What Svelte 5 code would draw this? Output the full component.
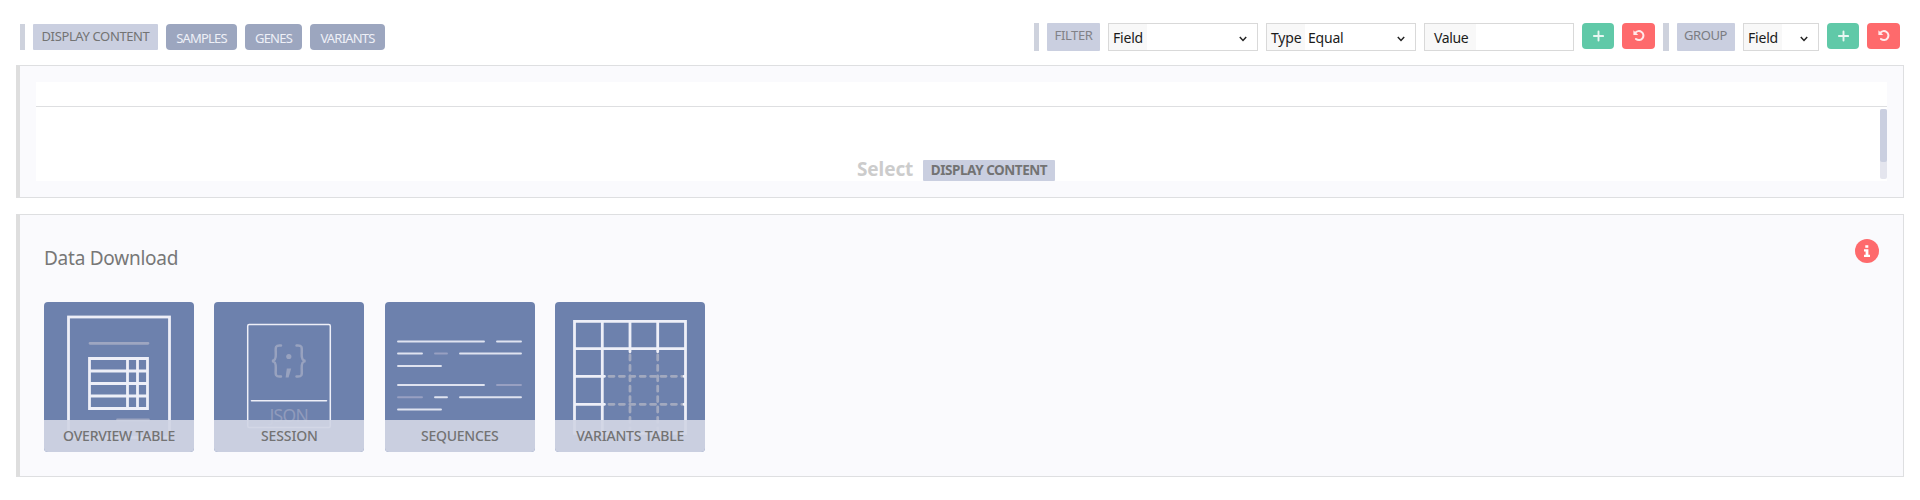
<script>
  const contents = [
    { name: 'SAMPLES', width: 71 },
    { name: 'GENES', width: 57 },
    { name: 'VARIANTS', width: 75 }
  ];
  const tiles = [
    { id: 'overview', name: 'OVERVIEW TABLE', spacing: -0.2 },
    { id: 'session', name: 'SESSION', spacing: -0.1 },
    { id: 'sequences', name: 'SEQUENCES', spacing: -0.25 },
    { id: 'variants', name: 'VARIANTS TABLE', spacing: -0.2 }
  ];
</script>

{#snippet chevron()}
  <svg class="chevron" width="8" height="6" viewBox="0 0 8 6"><path d="M.8 1 4 4.400 7.200 1" fill="none" stroke="#222" stroke-width="1.500" /></svg>
{/snippet}

{#snippet actions()}
  <button class="action add" aria-label="Add">
    <svg width="12" height="12" viewBox="0 0 12 12"><path d="M6.500 1.400v9.200M1.900 6h9.200" stroke="#e8f7f2" stroke-width="1.900" stroke-linecap="round" /></svg>
  </button>
  <button class="action reset" aria-label="Reset">
    <svg width="12" height="12" viewBox="0 0 12 12"><path d="M2.200 3A4.500 4.500 0 1 1 3 9" fill="none" stroke="#ffe9ea" stroke-width="2" stroke-linecap="round" /><path d="M.4.3v4.600h4.900z" fill="#ffe9ea" /></svg>
  </button>
{/snippet}

<div class="page">
  <header>
    <div class="left">
      <i class="bar"></i>
      <span class="tag display"><span>DISPLAY CONTENT</span></span>
      {#each contents as c}
        <button class="content" style:width="{c.width}px">{c.name}</button>
      {/each}
    </div>
    <div class="right">
      <i class="bar"></i>
      <span class="tag filter"><span>FILTER</span></span>
      <div class="box"><span class="prefix">Field</span>{@render chevron()}</div>
      <div class="box"><span class="prefix">Type</span><span class="val">Equal</span>{@render chevron()}</div>
      <div class="box"><span class="prefix value">Value</span></div>
      {@render actions()}
      <i class="bar wide"></i>
      <span class="tag group"><span>GROUP</span></span>
      <div class="box small"><span class="prefix">Field</span>{@render chevron()}</div>
      {@render actions()}
    </div>
  </header>

  <section class="panel view">
    <div class="canvas">
      <div class="head"></div>
      <div class="body">
        <div class="hint"><b class="select">Select</b><b class="hint-tag"><span>DISPLAY CONTENT</span></b></div>
        <div class="track"><div class="thumb"></div></div>
      </div>
    </div>
  </section>

  <section class="panel download">
    <div class="title">
      <h2>Data Download</h2>
      <svg class="info" width="24" height="24" viewBox="0 0 24 24">
        <circle cx="12" cy="12" r="12" fill="#fe6a6c" />
        <path d="M10.300 6.200h3v2.600h-3zM9 10.200h4.400v5.600H15V18H9v-2.200h1.600v-3.400H9z" fill="#fff" />
      </svg>
    </div>
    <div class="tiles">
      {#each tiles as t}
        <div class="tile">
          <svg width="150" height="150" viewBox="0 0 150 150" fill="none" stroke="#eeeff8" stroke-linecap="round">
            {#if t.id === 'overview'}
              <rect x="24.500" y="15" width="101" height="120.500" stroke-width="2.800" />
              <path d="M46 41.300h58M73.500 118h31" stroke="#9ea6c1" stroke-width="2.800" />
              <path d="M45.500 56.500h58v50h-58zM45.500 69h58M45.500 81.500h58M45.500 94h58M83.500 56.500v50M93.500 56.500v50" stroke-width="2.800" />
            {:else if t.id === 'session'}
              <rect x="33.700" y="22.500" width="82.600" height="103" rx="1.500" stroke-width="1.500" />
              <path d="M37.500 98.700h75" stroke-width="1.600" />
              <path d="M67 43.500c-6-.7-5.500 2-5.200 8 .2 4.500-.3 7-3.800 7.500 3.500.5 4 3 3.800 7.500-.3 6-.8 8.700 5.200 8M82.500 43.500c6-.7 5.500 2 5.200 8-.2 4.500.3 7 3.800 7.500-3.500.5-4 3-3.800 7.500.3 6 .8 8.700-5.200 8" stroke="#98a2bf" stroke-width="2.500" />
              <circle cx="74.800" cy="54.500" r="2.600" fill="#98a2bf" stroke="none" />
              <path d="M72.800 66.500h4.400l-2.600 9h-3z" fill="#98a2bf" stroke="none" />
              <text x="55.500" y="119.500" class="json">JSON</text>
            {:else if t.id === 'sequences'}
              <path d="M13 39.500h86M112 39.500h24M13 51.500h24M75 51.500h61M13 64h43M13 83h86M50 95.200h12M75 95.200h61M13 107.500h43" stroke="#dfe3f0" stroke-width="1.900" />
              <path d="M50 51.500h12M112 83h24M13 95.200h24" stroke="#98a0c2" stroke-width="1.900" />
            {:else}
              <path d="M75 53v78M102.700 53v78M54 74.300h74M54 102.300h74" stroke="#a2a9bf" stroke-width="2.800" stroke-dasharray="5 5.400" />
              <path d="M19.500 19.300h111v112h-111zM19.500 46.700h111M47.300 19.300v112M75 19.300v30.500M102.700 19.300v30.500M19.500 74.300h30M19.500 102.300h30M129 74.300h1M129 102.300h1" stroke-width="2.800" />
            {/if}
          </svg>
          <div class="caption" style:letter-spacing="{t.spacing}px">{t.name}</div>
        </div>
      {/each}
    </div>
  </section>
</div>

<style>
  :global(body) { background: #fff; overflow: hidden; }
  * { box-sizing: border-box; }
  .page { height: 500px; padding: 23px 16px 0; font-family: "Noto Sans", "Open Sans", sans-serif; color: #737373; }
  header { display: flex; justify-content: space-between; height: 42px; padding: 0 4px; }
  .left, .right { display: flex; align-items: flex-start; gap: 8px; }
  .left { padding-top: 1px; }
  button { border: 0; padding: 0; font: inherit; display: flex; justify-content: center; align-items: center; }
  .bar { width: 5px; height: 28px; background: #ced2dd; }
  .bar.wide { width: 6px; }
  .left .bar { height: 26px; }
  .tag { height: 28px; background: #cacfe0; border-radius: 1px; font-size: 13px; line-height: 24px; display: flex; justify-content: center; white-space: nowrap; }
  .display { width: 125px; height: 26px; letter-spacing: -.37px; }
  .filter { width: 53px; letter-spacing: -.4px; color: #818287; }
  .group { width: 58px; letter-spacing: -.45px; color: #7b7c82; padding-right: 1px; }
  .content { height: 26px; border-radius: 4px; background: #9ca6bf; color: #eef0f7; font-size: 13px; letter-spacing: -.8px; padding-top: 1px; }
  .box { width: 150px; height: 28px; border: 1px solid #d9d9d9; display: flex; align-items: center; color: #1b1b1b; font-size: 14px; line-height: 28px; padding-right: 10px; letter-spacing: -.2px; }
  .box.small { width: 76px; }
  .prefix { width: 38px; height: 26px; background: #f8f8f8; padding-left: 4px; }
  .prefix.value { width: 51px; padding-left: 9px; letter-spacing: -.4px; }
  .val { padding-left: 3px; height: 26px; }
  .chevron { margin-left: auto; margin-top: 4px; }
  .action { width: 32px; height: 26px; border-radius: 4px; }
  .add { background: #60c9a8; }
  .reset { width: 33px; background: #fe6a6c; }
  .panel { border: 1px solid #dedfe1; border-left: 4px solid #dedede; background: #fafafd; }
  .view { height: 133px; padding: 16px; }
  .canvas { width: 1851px; height: 99px; background: #fff; }
  .head { height: 25px; border-bottom: 1px solid #dedfe1; }
  .body { height: 74px; display: flex; }
  .hint { flex: 1; display: flex; align-items: flex-end; padding-left: 821px; }
  .select { font-size: 19px; line-height: 24px; color: #ccc; width: 66px; letter-spacing: -.1px; }
  .hint-tag { width: 132px; height: 21px; background: #cacfe0; border-radius: 1px; font-size: 13.500px; line-height: 21px; text-align: center; letter-spacing: -.46px; white-space: nowrap; }
  .track { width: 7px; height: 70px; margin-top: 2px; background: #e4e5ee; border-radius: 2px; }
  .thumb { height: 53px; background: #cacfe0; border-radius: 2px; }
  .download { height: 263px; margin-top: 16px; padding: 24px 24px 0; }
  .title { display: flex; justify-content: space-between; height: 63px; }
  h2 { margin: 4px 0 0; font-size: 19px; line-height: 30px; font-weight: 400; color: #777; letter-spacing: -.25px; }
  .tiles { display: flex; gap: 20.400px; }
  .tile { width: 150px; height: 150px; border-radius: 4px; background: #6d81ad; overflow: hidden; }
  .tile svg { display: block; }
  .caption { position: relative; height: 32px; margin-top: -32px; background: rgba(209, 213, 228, .93); text-align: center; font-size: 14px; font-weight: 500; line-height: 32px; white-space: nowrap; color: #737373; }
  .json { font: 17.500px "Noto Sans", sans-serif; fill: #909bbc; stroke: none; letter-spacing: -.7px; }
</style>
